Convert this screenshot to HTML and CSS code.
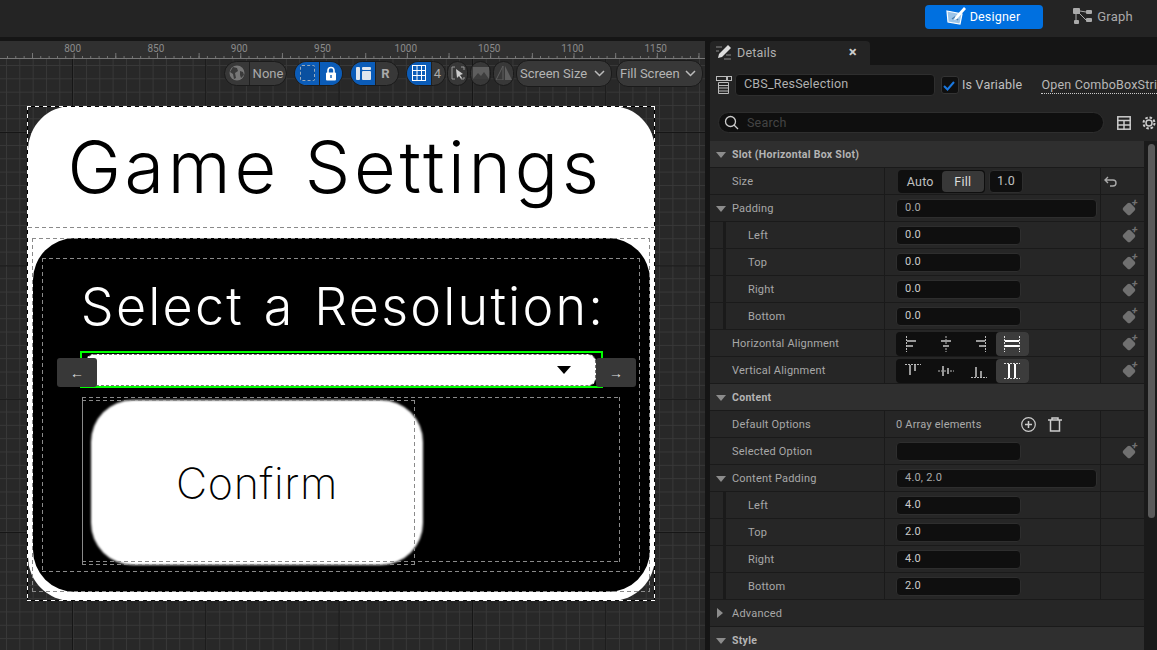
FILE: index.html
```html
<!DOCTYPE html>
<html lang="en">
<head>
  <meta charset="UTF-8" />
  <title>Widget Designer</title>
  <link rel="stylesheet" href="styles.css">
</head>
<body>
  <header class="topbar">
    <button class="mode mode-on">
      <svg width="22" height="22" viewBox="0 0 22 22"><path d="M2 6l15 3-2 10-12-2z" fill="#9cc4e8" stroke="#fff" stroke-width="1.2"/><path d="M7 14l3-2 3 3" fill="none" stroke="#4a7fb0" stroke-width="1.5"/><path d="M10 12L19 2l2 2-9 10-3 1z" fill="#fff"/></svg>
      Designer
    </button>
    <button class="mode mode-graph">
      <svg width="19" height="18" viewBox="0 0 19 18"><g fill="#aaa"><rect x="0" y="1" width="7" height="6" rx="1"/><rect x="1" y="13" width="5" height="4" rx="1"/><rect x="13" y="3" width="6" height="4" rx="1"/><rect x="13" y="11" width="6" height="4" rx="1"/></g><path d="M7 4l6 1M6 6l7 7M3 7v6" stroke="#aaa" fill="none"/></svg>
      Graph
    </button>
  </header>

  <main class="workspace">
    <section class="designer">
      <div class="ruler">
        <span>800</span><span>850</span><span>900</span><span>950</span><span>1000</span><span>1050</span><span>1100</span><span>1150</span>
      </div>
      <div class="canvas">
        <div class="toolbar">
          <div class="pill pill-none">
            <span class="seg">
              <svg width="16" height="16" viewBox="0 0 16 16"><circle cx="8" cy="8" r="7.5" fill="#777"/><path d="M4 2l4 1 1 3-3 2 1 5-2 1-1-5-3-2zM11 6l3 1 1 3-3 3-1-3z" fill="#3a3a3a"/></svg>
            </span>
            <span class="seg seg-text">None</span>
          </div>
          <div class="pill pill-pair">
            <span class="seg seg-blue"><i class="dash-icon"></i></span>
            <span class="seg seg-blue">
              <svg width="12" height="15" viewBox="0 0 12 15"><path d="M3 7V4.500a3 3 0 0 1 6 0V7" fill="none" stroke="#fff" stroke-width="1.6"/><rect x="1" y="6.500" width="10" height="8" rx="1" fill="#fff"/><rect x="5.300" y="9" width="1.400" height="3" fill="#0b5cb8"/></svg>
            </span>
          </div>
          <div class="pill pill-pair">
            <span class="seg seg-blue">
              <svg width="15" height="15" viewBox="0 0 15 15" fill="#dfe6ee"><rect x="0" y="1" width="4" height="13" rx="1"/><rect x="6" y="1" width="9" height="3" rx="1"/><rect x="6" y="5" width="9" height="9" rx="1"/></svg>
            </span>
            <span class="seg seg-text seg-bold">R</span>
          </div>
          <div class="pill pill-grid">
            <span class="seg seg-blue">
              <svg width="14" height="16" viewBox="0 0 14 16" fill="none" stroke="#fff"><rect x="0.500" y="0.500" width="13" height="15"/><path d="M5 0v16M9.500 0v16M0 5.500h14M0 10.500h14"/></svg>
            </span>
            <span class="seg seg-text">4</span>
          </div>
          <div class="round">
            <svg width="14" height="14" viewBox="0 0 14 14"><path d="M4 1H1v12h3M10 1h3v3M13 11v2h-3" fill="none" stroke="#999"/><path d="M5 3l7 5-3 1 2 3-1 1-2-3-2 2z" fill="#ccc"/></svg>
          </div>
          <div class="round">
            <svg width="16" height="12" viewBox="0 0 16 12"><path d="M0 0h16v12H0z" fill="#5e5e5e"/><path d="M0 12l5-6 3 3 3-4 5 7z" fill="#3d3d3d"/></svg>
          </div>
          <div class="round">
            <svg width="16" height="14" viewBox="0 0 16 14"><path d="M7 0v14H0z" fill="none" stroke="#5e5e5e"/><path d="M9 0l7 14H9z" fill="#5e5e5e"/></svg>
          </div>
          <div class="drop drop-screen">Screen Size <svg width="11" height="7" viewBox="0 0 11 7"><path d="M1 1l4.500 4.500L10 1" fill="none" stroke="#bbb" stroke-width="1.500"/></svg></div>
          <div class="drop drop-fill">Fill Screen <svg width="11" height="7" viewBox="0 0 11 7"><path d="M1 1l4.500 4.500L10 1" fill="none" stroke="#bbb" stroke-width="1.500"/></svg></div>
        </div>

        <div class="widget sheet"></div>
        <div class="widget title">Game Settings</div>
        <div class="widget title-line"></div>
        <div class="widget inner"></div>
        <div class="widget inner-frame dashed"></div>
        <div class="widget inner-box dashed"></div>
        <div class="widget heading">Select a Resolution:</div>
        <div class="widget combo"><i class="wedge"></i></div>
        <div class="widget combo-select"></div>
        <div class="widget arrow arrow-left">←</div>
        <div class="widget arrow arrow-right">→</div>
        <div class="widget confirm">Confirm</div>
        <div class="widget confirm-row dashed"></div>
        <div class="widget confirm-box dashed"></div>
        <div class="widget sheet-frame"></div>
      </div>
    </section>

    <aside class="details">
      <div class="tabs">
        <div class="tab">
          <svg width="16" height="16" viewBox="0 0 16 16"><path d="M3 10L12 1l3 3-9 9-4 1z" fill="#ddd"/><path d="M0 3h6M0 7h3M8 15h7M10 11h5" stroke="#888"/></svg>
          <span>Details</span>
          <b class="tab-x">×</b>
        </div>
      </div>
      <div class="name-row">
        <svg width="16" height="18" viewBox="0 0 16 18" fill="none" stroke="#bbb"><rect x="0.500" y="0.500" width="10" height="4"/><rect x="11.500" y="0.500" width="4" height="4"/><path d="M2.500 6.500h10v11h-10zM2.500 9.500h10M2.500 12h10M2.500 15h10"/></svg>
        <div class="name-field">CBS_ResSelection</div>
        <div class="check">
          <svg width="12" height="10" viewBox="0 0 12 10"><path d="M1 5l3.500 3.500L11 1" fill="none" stroke="#1a78e0" stroke-width="2"/></svg>
        </div>
        <span class="name-label">Is Variable</span>
        <span class="open-link">Open ComboBoxStri</span>
      </div>
      <div class="search-row">
        <div class="search">
          <svg width="15" height="15" viewBox="0 0 15 15" fill="none" stroke="#ccc" stroke-width="1.300"><circle cx="6.500" cy="6.500" r="5"/><path d="M10 10l4 4"/></svg>
          <span>Search</span>
        </div>
        <svg width="14" height="14" viewBox="0 0 14 14" fill="none" stroke="#ccc" stroke-width="1.500"><rect x="0.800" y="0.800" width="12.400" height="12.400"/><path d="M0 4.500h14M0 9h14M7 4.500V14" /></svg>
        <svg width="16" height="16" viewBox="0 0 16 16" fill="none" stroke="#ccc"><circle cx="8" cy="8" r="3" stroke-width="1.500"/><circle cx="8" cy="8" r="5.500" stroke-width="2" stroke-dasharray="2.500 1.800"/></svg>
      </div>

      <div class="props-wrap">
        <div class="props">
          <div class="head"><i class="tri"></i>Slot (Horizontal Box Slot)</div>

          <div class="row row-size">
            <div class="label">Size</div>
            <div class="value">
              <div class="seg-ctl"><span>Auto</span><span class="seg-on">Fill</span></div>
              <div class="num">1.0</div>
            </div>
            <div class="extra">
              <svg width="13" height="11" viewBox="0 0 13 11" fill="none" stroke="#aaa" stroke-width="1.400"><path d="M4 1L1 4l3 3M1 4h8a3 3 0 0 1 0 6H6"/></svg>
            </div>
          </div>

          <div class="row">
            <div class="label"><i class="tri"></i>Padding</div>
            <div class="value"><div class="field field-wide field-dim">0.0</div></div>
            <div class="extra"><i class="tag"></i></div>
          </div>
          <div class="row sub">
            <div class="label">Left</div>
            <div class="value"><div class="field">0.0</div></div>
            <div class="extra"><i class="tag"></i></div>
          </div>
          <div class="row sub">
            <div class="label">Top</div>
            <div class="value"><div class="field">0.0</div></div>
            <div class="extra"><i class="tag"></i></div>
          </div>
          <div class="row sub">
            <div class="label">Right</div>
            <div class="value"><div class="field">0.0</div></div>
            <div class="extra"><i class="tag"></i></div>
          </div>
          <div class="row sub">
            <div class="label">Bottom</div>
            <div class="value"><div class="field">0.0</div></div>
            <div class="extra"><i class="tag"></i></div>
          </div>

          <div class="row">
            <div class="label">Horizontal Alignment</div>
            <div class="value">
              <div class="align">
                <span><svg width="16" height="16" viewBox="0 0 16 16"><path d="M1.500 0v16" stroke="#bbb" stroke-dasharray="2 1"/><path d="M2 4h9v2H2zM2 9h6v2H2z" fill="#999"/></svg></span>
                <span><svg width="16" height="16" viewBox="0 0 16 16"><path d="M8 0v16" stroke="#bbb" stroke-dasharray="2 1"/><path d="M3 4h10v2H3zM5 9h6v2H5z" fill="#999"/></svg></span>
                <span><svg width="16" height="16" viewBox="0 0 16 16"><path d="M14.500 0v16" stroke="#bbb" stroke-dasharray="2 1"/><path d="M5 4h9v2H5zM8 9h6v2H8z" fill="#999"/></svg></span>
                <span class="align-on"><svg width="18" height="16" viewBox="0 0 18 16"><path d="M1.500 0v16M16.500 0v16" stroke="#ddd" stroke-dasharray="2 1"/><path d="M2 4h14v2H2zM2 9h14v2H2z" fill="#fff"/></svg></span>
              </div>
            </div>
            <div class="extra"><i class="tag"></i></div>
          </div>
          <div class="row">
            <div class="label">Vertical Alignment</div>
            <div class="value">
              <div class="align">
                <span><svg width="16" height="16" viewBox="0 0 16 16"><path d="M0 1.500h16" stroke="#bbb" stroke-dasharray="2 1"/><path d="M4 2h2v10H4zM9 2h2v6H9z" fill="#999"/></svg></span>
                <span><svg width="16" height="16" viewBox="0 0 16 16"><path d="M0 8h16" stroke="#bbb" stroke-dasharray="2 1"/><path d="M4 3h2v10H4zM9 5h2v6H9z" fill="#999"/></svg></span>
                <span><svg width="16" height="16" viewBox="0 0 16 16"><path d="M0 14.500h16" stroke="#bbb" stroke-dasharray="2 1"/><path d="M4 4h2v10H4zM9 8h2v6H9z" fill="#999"/></svg></span>
                <span class="align-on"><svg width="16" height="18" viewBox="0 0 16 18"><path d="M0 1.500h16M0 16.500h16" stroke="#ddd" stroke-dasharray="2 1"/><path d="M4 2h2v14H4zM10 2h2v14h-2z" fill="#fff"/></svg></span>
              </div>
            </div>
            <div class="extra"><i class="tag"></i></div>
          </div>

          <div class="head"><i class="tri"></i>Content</div>

          <div class="row">
            <div class="label">Default Options</div>
            <div class="value value-array">
              <span class="array-text">0 Array elements</span>
              <svg width="15" height="15" viewBox="0 0 15 15" fill="none" stroke="#ccc" stroke-width="1.200"><circle cx="7.500" cy="7.500" r="6.800"/><path d="M7.500 4v7M4 7.500h7" stroke-width="1.500"/></svg>
              <svg width="14" height="15" viewBox="0 0 14 15" fill="none" stroke="#ccc" stroke-width="1.500"><path d="M0 3h14M4 3V1h6v2M2.500 3v11h9V3"/></svg>
            </div>
            <div class="extra"></div>
          </div>
          <div class="row">
            <div class="label">Selected Option</div>
            <div class="value"><div class="field"></div></div>
            <div class="extra"><i class="tag"></i></div>
          </div>
          <div class="row">
            <div class="label"><i class="tri"></i>Content Padding</div>
            <div class="value"><div class="field field-wide field-dim">4.0, 2.0</div></div>
            <div class="extra"></div>
          </div>
          <div class="row sub">
            <div class="label">Left</div>
            <div class="value"><div class="field">4.0</div></div>
            <div class="extra"></div>
          </div>
          <div class="row sub">
            <div class="label">Top</div>
            <div class="value"><div class="field">2.0</div></div>
            <div class="extra"></div>
          </div>
          <div class="row sub">
            <div class="label">Right</div>
            <div class="value"><div class="field">4.0</div></div>
            <div class="extra"></div>
          </div>
          <div class="row sub">
            <div class="label">Bottom</div>
            <div class="value"><div class="field">2.0</div></div>
            <div class="extra"></div>
          </div>

          <div class="row row-plain"><div class="label"><i class="tri tri-right"></i>Advanced</div></div>
          <div class="head"><i class="tri"></i>Style</div>
        </div>
        <div class="scroll"><div class="thumb"></div></div>
      </div>
    </aside>
  </main>
</body>
</html>
```

FILE: styles.css
```css
* {
  box-sizing: border-box;
}

body {
  margin: 0;
  width: 1157px;
  height: 650px;
  overflow: hidden;
  background: #151515;
  font-family: Roboto, "Liberation Sans", sans-serif;
  color: #c0c0c0;
}

/* top bar */
.topbar {
  height: 37px;
  background: #242424;
  display: flex;
  justify-content: flex-end;
  align-items: flex-start;
  padding-top: 5px;
  padding-right: 3px;
  margin-bottom: 4px;
}

.mode {
  width: 111px;
  height: 24px;
  border: none;
  border-radius: 4px;
  background: none;
  color: #aaa;
  font: 13px Roboto, sans-serif;
  letter-spacing: 0.2px;
  display: flex;
  align-items: center;
  justify-content: center;
  gap: 5px;
  padding: 0 0 2px;
}

.mode-on {
  width: 118px;
  background: #0070e0;
  color: #fff;
  font-size: 12.5px;
  gap: 3px;
  padding-right: 3px;
}

.mode-graph {
  padding-left: 9px;
}

.workspace {
  display: flex;
  gap: 5px;
  height: 609px;
}

/* designer */
.designer {
  width: 705px;
  display: flex;
  flex-direction: column;
}

.ruler {
  height: 18px;
  flex: none;
  display: flex;
  padding-left: 31px;
  background-color: #303030;
  background-image:
    linear-gradient(#777, #777),
    linear-gradient(to right, #777 1px, transparent 1px),
    linear-gradient(to right, #777 1px, transparent 1px);
  background-size: 100% 1px, 41.66px 6px, 8.33px 3px;
  background-position: 0 100%, 32px 100%, 7px 100%;
  background-repeat: no-repeat, repeat-x, repeat-x;
  font-size: 10px;
  line-height: 15px;
  color: #8a8a8a;
}

.ruler span {
  width: 83.3px;
  flex: none;
  text-align: center;
}

.canvas {
  position: relative;
  flex: 1;
  overflow: hidden;
  background-color: #282828;
  background-image:
    linear-gradient(to right, #161616 1px, transparent 1px),
    linear-gradient(to bottom, #161616 1px, transparent 1px),
    linear-gradient(to right, #383838 1px, transparent 1px),
    linear-gradient(to bottom, #383838 1px, transparent 1px);
  background-size: 133.33px 133.33px, 133.33px 133.33px, 13.33px 13.33px, 13.33px 13.33px;
  background-position: 72px 0, 0 73px, 6px 0, 0 6px;
}

.toolbar {
  position: absolute;
  left: 224px;
  top: 1px;
  display: flex;
  align-items: center;
  height: 26px;
  font-size: 13px;
}

.pill {
  height: 25px;
  display: flex;
  border: 1px solid #1a1a1a;
  border-radius: 13px;
  overflow: hidden;
  background: #383838;
}

.pill-none {
  width: 63px;
  margin-right: 7px;
}

.pill-pair {
  width: 49px;
  margin-right: 7px;
}

.pill-grid {
  width: 40px;
  margin-right: 1px;
}

.seg {
  flex: 1;
  display: flex;
  align-items: center;
  justify-content: center;
}

.seg + .seg {
  border-left: 1px solid #1f1f1f;
}

.pill-none .seg:first-child,
.pill-pair .seg:first-child,
.pill-grid .seg:first-child {
  flex: none;
  width: 24px;
}

.seg-blue {
  background: #0b5cb8;
}

.seg-text {
  color: #aaa;
}

.seg-bold {
  font-weight: 700;
  padding-right: 3px;
}

.pill-grid .seg-text {
  padding-right: 2px;
}

.dash-icon {
  width: 15px;
  height: 16px;
  border: 1px dashed #9ab;
  border-radius: 2px;
  background: #0a50a0;
}

.round {
  width: 21px;
  height: 25px;
  margin-right: 2px;
  flex: none;
  border: 1px solid #1a1a1a;
  border-radius: 11px;
  background: #383838;
  display: flex;
  align-items: center;
  justify-content: center;
}

.drop {
  height: 27px;
  flex: none;
  border: 1px solid #1a1a1a;
  border-radius: 12px;
  background: #383838;
  color: #b4b4b4;
  display: flex;
  align-items: center;
  justify-content: space-between;
  padding: 0 6px 0 3px;
}

.drop-screen {
  width: 96px;
  margin-right: 4px;
}

.drop-fill {
  width: 87px;
}

/* things placed on the design canvas */
.widget {
  position: absolute;
}

.dashed {
  --dash: #8a8a8a;
  background:
    repeating-linear-gradient(to right, var(--dash) 0 4px, transparent 4px 7px) top / 100% 1px no-repeat,
    repeating-linear-gradient(to right, var(--dash) 0 4px, transparent 4px 7px) bottom / 100% 1px no-repeat,
    repeating-linear-gradient(to bottom, var(--dash) 0 4px, transparent 4px 7px) left / 1px 100% no-repeat,
    repeating-linear-gradient(to bottom, var(--dash) 0 4px, transparent 4px 7px) right / 1px 100% no-repeat;
}

.sheet {
  left: 28px;
  top: 47px;
  width: 627px;
  height: 495px;
  background: #fff;
  border-radius: 44px;
}

.sheet-frame {
  left: 27px;
  top: 47px;
  width: 628px;
  height: 495px;
  border: 1px solid #000;
}

.sheet-frame::after {
  content: "";
  position: absolute;
  inset: -1px;
  --dash: #fff;
  background:
    repeating-linear-gradient(to right, var(--dash) 0 4px, transparent 4px 8px) top / 100% 1px no-repeat,
    repeating-linear-gradient(to right, var(--dash) 0 4px, transparent 4px 8px) bottom / 100% 1px no-repeat,
    repeating-linear-gradient(to bottom, var(--dash) 0 4px, transparent 4px 8px) left / 1px 100% no-repeat,
    repeating-linear-gradient(to bottom, var(--dash) 0 4px, transparent 4px 8px) right / 1px 100% no-repeat;
}

.title {
  left: 28px;
  top: 47px;
  width: 614px;
  height: 121px;
  display: flex;
  align-items: center;
  justify-content: center;
  color: #000;
  font: 350 72px Inter, sans-serif;
  letter-spacing: 3.7px;
  word-spacing: 1px;
}

.title-line {
  left: 28px;
  top: 168px;
  width: 627px;
  height: 1px;
  background: repeating-linear-gradient(to right, #8a8a8a 0 4px, transparent 4px 7px);
}

.inner {
  left: 33px;
  top: 179px;
  width: 617px;
  height: 354px;
  background: #000;
  border-radius: 42px;
}

.inner-frame {
  left: 32px;
  top: 179px;
  width: 618px;
  height: 354px;
}

.inner-box {
  left: 42px;
  top: 199px;
  width: 598px;
  height: 314px;
}

.heading {
  left: 42px;
  top: 215px;
  width: 602px;
  height: 64px;
  display: flex;
  align-items: center;
  justify-content: center;
  color: #fff;
  font: 350 52px Inter, sans-serif;
  letter-spacing: 2.2px;
  word-spacing: 3px;
}

.combo {
  left: 86px;
  top: 295px;
  width: 510px;
  height: 32px;
  background: #fff;
  border-radius: 8px;
  border: 1px dashed #777;
}

.wedge {
  position: absolute;
  left: 470px;
  top: 11px;
  border-left: 7px solid transparent;
  border-right: 7px solid transparent;
  border-top: 8px solid #000;
}

.combo-select {
  left: 80px;
  top: 292px;
  width: 523px;
  height: 37px;
  border-top: 2px solid #0f0;
  border-bottom: 2px solid #0f0;
}

.combo-select::before {
  content: "";
  position: absolute;
  left: 0;
  right: 0;
  top: 0;
  height: 5px;
  border-left: 2px solid #0f0;
  border-right: 2px solid #0f0;
}

.arrow {
  top: 299px;
  width: 40px;
  height: 29px;
  background: #383838;
  border-radius: 3px;
  color: #ddd;
  font-size: 14px;
  display: flex;
  align-items: center;
  justify-content: center;
}

.arrow-left {
  left: 57px;
}

.arrow-right {
  left: 596px;
}

.confirm {
  left: 91px;
  top: 341px;
  width: 332px;
  height: 165px;
  isolation: isolate;
  color: #000;
  font: 250 43px Inter, sans-serif;
  letter-spacing: 0.7px;
  display: flex;
  align-items: center;
  justify-content: center;
}

/* the button edge is soft in the designer */
.confirm::before {
  content: "";
  position: absolute;
  inset: 0;
  z-index: -1;
  background: #fff;
  border-radius: 42px;
  filter: blur(1px);
}

.confirm-row {
  left: 82px;
  top: 338px;
  width: 538px;
  height: 165px;
}

.confirm-box {
  left: 82px;
  top: 341px;
  width: 333px;
  height: 165px;
}

/* details panel */
.details {
  width: 447px;
  display: flex;
  flex-direction: column;
  overflow: hidden;
  font-size: 11.5px;
  letter-spacing: 0.2px;
}

.tabs {
  height: 24px;
  flex: none;
}

.tab {
  width: 160px;
  height: 24px;
  background: #242424;
  border-radius: 4px 4px 0 0;
  display: flex;
  align-items: center;
  gap: 5px;
  padding: 0 13px 2px 6px;
  font-size: 12.5px;
  color: #b0b0b0;
}

.tab-x {
  margin-left: auto;
  font-size: 15px;
  color: #ccc;
}

.name-row {
  height: 47px;
  flex: none;
  background: #242424;
  display: flex;
  align-items: flex-start;
  padding: 9px 0 0 6px;
  font-size: 12.5px;
  white-space: nowrap;
  overflow: hidden;
}

.name-row svg:first-child {
  margin: 2px 3px 0 0;
  flex: none;
}

.name-field {
  width: 200px;
  height: 22px;
  flex: none;
  background: #0f0f0f;
  border: 1px solid #2e2e2e;
  border-radius: 4px;
  padding-left: 8px;
  font-size: 12.5px;
  line-height: 18px;
  color: #b0b0b0;
}

.check {
  width: 18px;
  height: 18px;
  flex: none;
  margin: 2px 3px 0 6px;
  background: #0f0f0f;
  border: 1px solid #333;
  border-radius: 3px;
  display: flex;
  align-items: center;
  justify-content: center;
}

.name-label {
  line-height: 22px;
  color: #c0c0c0;
}

.open-link {
  margin-left: 19px;
  line-height: 16px;
  margin-top: 3px;
  color: #b8b8b8;
  border-bottom: 1px dotted #ccc;
}

.search-row {
  height: 29px;
  flex: none;
  background: #242424;
  display: flex;
  padding-left: 8px;
  gap: 13px;
  align-items: flex-start;
}

.search-row > svg {
  margin-top: 4px;
  flex: none;
}

.search-row > svg:last-child {
  margin-left: -3px;
  margin-top: 3px;
}

.search {
  width: 386px;
  height: 21px;
  flex: none;
  background: #0f0f0f;
  border: 1px solid #2e2e2e;
  border-radius: 11px;
  display: flex;
  align-items: center;
  gap: 8px;
  padding: 0 0 1px 5px;
  font-size: 12.5px;
  color: #444;
}

.props-wrap {
  flex: 1;
  display: flex;
  background: #242424;
  overflow: hidden;
}

.props {
  width: 434px;
  flex: none;
}

.head {
  height: 27px;
  background: #2f2f2f;
  border-bottom: 1px solid #1a1a1a;
  display: flex;
  align-items: center;
  padding-left: 22px;
  position: relative;
  font-weight: 700;
  font-size: 10.5px;
  letter-spacing: 0.3px;
  color: #b4b4b4;
}

.row {
  height: 27px;
  display: grid;
  grid-template-columns: 174px 216px 44px;
  background: #262626;
  border-bottom: 1px solid #1a1a1a;
}

.row-plain {
  grid-template-columns: 1fr;
}

.label {
  position: relative;
  display: flex;
  align-items: center;
  padding-left: 22px;
  padding-top: 1px;
  color: #a8a8a8;
  font-size: 11px;
}

.sub .label {
  padding-left: 38px;
}

.sub .label::before {
  content: "";
  position: absolute;
  left: 13px;
  top: -1px;
  bottom: -1px;
  width: 3px;
  background: #1a1a1a;
}

.tri {
  position: absolute;
  left: 6px;
  top: 11px;
  border-left: 5px solid transparent;
  border-right: 5px solid transparent;
  border-top: 6px solid #8c8c8c;
}

.tri-right {
  left: 7px;
  top: 8px;
  border-top: 5px solid transparent;
  border-bottom: 5px solid transparent;
  border-left: 6px solid #8c8c8c;
  border-right: none;
}

.value {
  border-left: 1px solid #1a1a1a;
  display: flex;
  align-items: center;
  padding: 1px 0 0 11px;
}

.extra {
  border-left: 1px solid #1a1a1a;
  display: flex;
  align-items: center;
  padding-left: 23px;
}

.row-size .extra {
  padding-left: 3px;
}

.row-size .value {
  padding-left: 13px;
}

.field {
  width: 125px;
  height: 19px;
  background: #0f0f0f;
  border: 1px solid #2e2e2e;
  border-radius: 4px;
  padding-left: 8px;
  font-size: 11px;
  line-height: 15px;
  color: #ccc;
}

.field-wide {
  width: 201px;
}

.field-dim {
  color: #aaa;
}

.seg-ctl {
  width: 87px;
  height: 23px;
  background: #0f0f0f;
  border-radius: 4px;
  display: flex;
  padding: 1px;
  font-size: 12.5px;
  line-height: 21px;
}

.seg-ctl span {
  flex: 1;
  text-align: center;
}

.seg-on {
  background: #383838;
  border-radius: 4px;
  color: #ddd;
}

.num {
  width: 34px;
  height: 23px;
  margin-left: 4px;
  background: #0f0f0f;
  border: 1px solid #2e2e2e;
  border-radius: 4px;
  text-align: center;
  font-size: 12.5px;
  line-height: 19px;
}

.align {
  width: 133px;
  height: 24px;
  background: #0f0f0f;
  border-radius: 4px;
  display: flex;
}

.align span {
  flex: 1;
  display: flex;
  align-items: center;
  justify-content: center;
}

.align .align-on {
  background: #3c3c3c;
  border-radius: 4px;
}

.value-array svg:nth-of-type(1) {
  margin-left: 39px;
}

.value-array svg:nth-of-type(2) {
  margin-left: 12px;
}

.array-text {
  width: 86px;
  flex: none;
  font-size: 11px;
  color: #aaa;
}

/* gray tag with a little plus */
.tag {
  position: relative;
  width: 10px;
  height: 10px;
  margin-top: 2px;
  background: #707070;
  border-radius: 2px;
  transform: rotate(45deg);
}

.tag::after {
  content: "+";
  position: absolute;
  left: 0;
  top: -8px;
  width: 10px;
  text-align: center;
  transform: rotate(-45deg);
  font-size: 11px;
  line-height: 10px;
  font-weight: 700;
  color: #707070;
}

.scroll {
  width: 13px;
  flex: none;
  background: #1a1a1a;
  padding: 3px 2px 0 4px;
}

.thumb {
  height: 374px;
  background: #5a5a5a;
  border-radius: 4px;
}
```
